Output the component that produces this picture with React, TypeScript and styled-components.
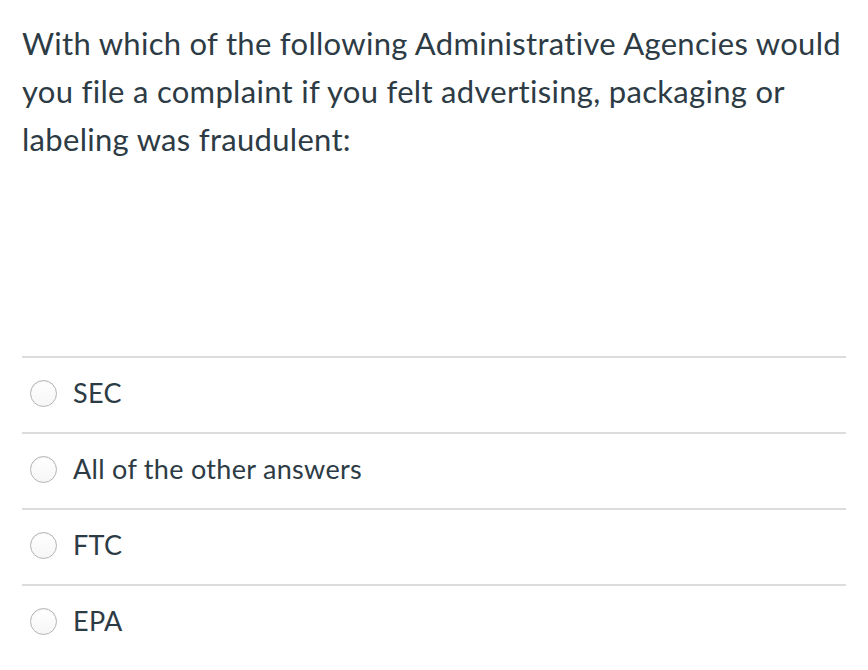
import React from "react";
import styled, { createGlobalStyle } from "styled-components";

const Global = createGlobalStyle`
  html, body { margin: 0; padding: 0; background: #ffffff; }
  body {
    font-family: Lato, "Open Sans", sans-serif;
    color: #2d3b45;
    font-variant-ligatures: no-common-ligatures;
  }
`;

const Page = styled.div`
  padding: 19px 22px 0 22px;
  width: 824px;
`;

const Question = styled.div`
  font-size: 31px;
  line-height: 48px;
  letter-spacing: 0.3px;
  min-height: 337px;
`;

const AnswerList = styled.div`
  display: flex;
  flex-direction: column;
`;

const Answer = styled.label`
  display: flex;
  align-items: center;
  height: 74px;
  border-top: 2px solid #dcdcdc;
  padding-left: 8px;
  gap: 16px;
`;

const Radio = styled.span`
  width: 25px;
  height: 25px;
  border-radius: 50%;
  border: 1px solid #b3b3b3;
  background: linear-gradient(#ffffff, #f6f6f6);
  box-shadow: inset 0 1px 1px rgba(0, 0, 0, 0.06);
  flex-shrink: 0;
  margin-top: -3px;
`;

const AnswerText = styled.span`
  font-size: 27px;
  line-height: 32px;
  letter-spacing: 0.3px;
  margin-top: -4px;
`;

const answers = ["SEC", "All of the other answers", "FTC", "EPA"];

export default function App() {
  return (
    <Page>
      <Global />
      <Question>
        With which of the following Administrative Agencies would you file a complaint if you felt advertising, packaging or labeling was fraudulent:
      </Question>
      <AnswerList>
        {answers.map((a) => (
          <Answer key={a}>
            <Radio />
            <AnswerText>{a}</AnswerText>
          </Answer>
        ))}
      </AnswerList>
    </Page>
  );
}
